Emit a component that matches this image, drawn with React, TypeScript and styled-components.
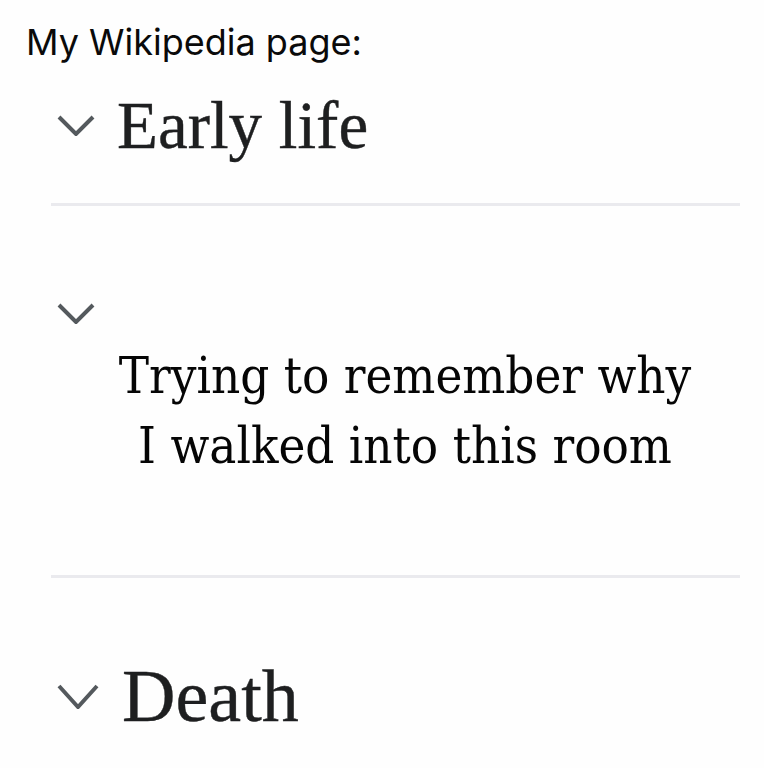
import React from "react";
import styled, { createGlobalStyle } from "styled-components";

const Global = createGlobalStyle`
  html, body { margin: 0; padding: 0; background: #ffffff; }
  #root { width: 764px; min-height: 768px; }
`;

const Page = styled.div`
  width: 764px;
  height: 768px;
  overflow: hidden;
  background: #fefefe;
  display: flex;
  flex-direction: column;
`;

const Caption = styled.div`
  padding: 20px 0 0 26px;
  font-family: Inter, "Liberation Sans", sans-serif;
  font-size: 36px;
  line-height: 44px;
  color: #0a0a0a;
`;

const HeadingRow = styled.div<{ $top: number; $h: number; $gap: number }>`
  display: flex;
  align-items: center;
  margin-top: ${(p) => p.$top}px;
  height: ${(p) => p.$h}px;
  padding-left: 57px;
  gap: ${(p) => p.$gap}px;
`;

const Title = styled.h2<{ $size: number; $lh: number }>`
  margin: 0;
  font-family: "Liberation Serif", "Times New Roman", serif;
  font-weight: 400;
  font-size: ${(p) => p.$size}px;
  line-height: ${(p) => p.$lh}px;
  color: #1e1f20;
  -webkit-text-stroke: 0.4px #1e1f20;
`;

const Divider = styled.hr<{ $top: number }>`
  margin: ${(p) => p.$top}px 24px 0 51px;
  border: none;
  height: 3px;
  background: #eaeaee;
`;

const Section = styled.div`
  display: flex;
  flex-direction: column;
  padding-top: 97px;
`;

const ChevronRow = styled.div`
  display: flex;
  padding-left: 57px;
  height: 20px;
`;

const Joke = styled.p`
  margin: 18px 0 0 46px;
  text-align: center;
  font-family: "DejaVu Serif Condensed", "DejaVu Serif", serif;
  font-stretch: condensed;
  font-size: 50.5px;
  line-height: 70px;
  color: #050505;
`;

const Chevron = ({ w, h }: { w: number; h: number }) => (
  <svg width={w} height={h} viewBox={`0 0 ${w} ${h}`} style={{ display: "block", flex: "none" }}>
    <polyline
      points={`2,2 ${w / 2},${h - 2} ${w - 2},2`}
      fill="none"
      stroke="#54595d"
      strokeWidth={4}
      strokeLinecap="butt"
      strokeLinejoin="miter"
    />
  </svg>
);

export default function App() {
  return (
    <Page>
      <Global />
      <Caption>My Wikipedia page:</Caption>
      <HeadingRow $top={21} $h={80} $gap={22}>
        <Chevron w={38} h={21} />
        <Title $size={67} $lh={80}>Early life</Title>
      </HeadingRow>
      <Divider $top={38} />
      <Section>
        <ChevronRow>
          <Chevron w={38} h={21} />
        </ChevronRow>
        <Joke>
          Trying to remember why
          <br />I walked into this room
        </Joke>
      </Section>
      <Divider $top={94} />
      <HeadingRow $top={74} $h={88} $gap={23}>
        <Chevron w={42} h={25} />
        <Title $size={74} $lh={88}>Death</Title>
      </HeadingRow>
    </Page>
  );
}
